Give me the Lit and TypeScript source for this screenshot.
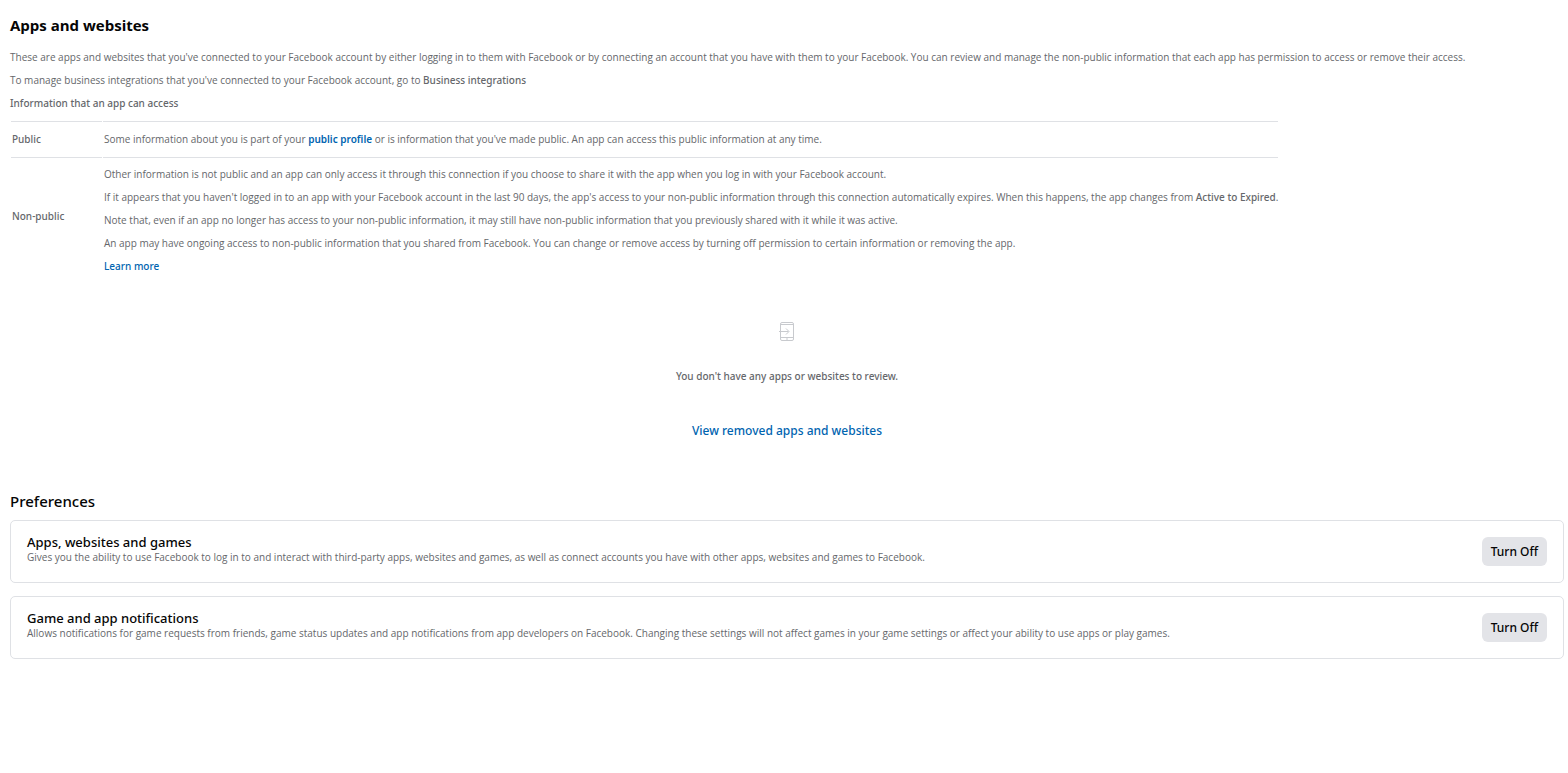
import { LitElement, html, css } from "lit";
import { customElement } from "lit/decorators.js";

@customElement("app-root")
export class AppRoot extends LitElement {
  static styles = css`
    :host { display: block; background: #fff; color: #65676b; font: 10px/15px "Open Sans", sans-serif; }
    .page { padding: 15px 4px 16px 10px; }
    h1, h2, h3, p { margin: 0; }
    h1 { font-size: 15px; line-height: 20px; font-weight: 700; color: #050505; }
    .intro { padding-top: 15px; display: grid; gap: 8px; }
    b, .label, a, th, .empty p, h2, h3, button { font-family: "Noto Sans", sans-serif; font-weight: 500; }
    a { color: #0064b0; text-decoration: none; }
    .profile { font-weight: 600; }
    a.plain { color: inherit; }
    table { margin-top: 10px; border-collapse: separate; border-spacing: 1px 0; }
    th, td { text-align: left; border-top: 1px solid #dfe1e5; }
    th { width: 91px; padding: 0 1px; box-sizing: border-box; }
    td { padding: 10px 0 10px 1px; }
    td.long { padding: 9px 0 1px 1px; }
    .stack { display: grid; gap: 8px; }
    .empty { display: flex; flex-direction: column; align-items: center; padding-top: 47px; }
    .empty svg { width: 20px; height: 20px; }
    .empty p { margin: 27px 0 38px; }
    .removed { font-size: 12px; line-height: 18px; }
    h2 { margin: 51px 0 9px; font-size: 15px; line-height: 20px; color: #050505; }
    .cards { display: grid; gap: 13px; }
    .card { display: flex; align-items: center; justify-content: space-between; border: 1px solid #dfe1e5; border-radius: 5px; padding: 13px 16px; }
    .text { padding-bottom: 4px; }
    h3 { font-size: 13px; line-height: 16px; color: #050505; }
    button { border: 0; border-radius: 6px; background: #e3e4e8; color: #050505; font-size: 12px; line-height: 17px; padding: 6px 9px; white-space: nowrap; }
  `;

  private card(title: string, text: string) {
    return html`<section class="card">
      <div class="text"><h3>${title}</h3><p>${text}</p></div>
      <button type="button" aria-label="Turn Off ${title}">Turn Off</button>
    </section>`;
  }

  render() {
    return html`<main class="page">
      <h1>Apps and websites</h1>
      <div class="intro">
        <p>These are apps and websites that you've connected to your Facebook account by either logging in to them with Facebook or by connecting an account that you have with them to your Facebook. You can review and manage the non-public information that each app has permission to access or remove their access.</p>
        <p>To manage business integrations that you've connected to your Facebook account, go to <a class="plain" href="#business">Business integrations</a></p>
        <p class="label">Information that an app can access</p>
      </div>
      <table>
        <tr><th scope="row">Public</th><td>Some information about you is part of your <a class="profile" href="#profile">public profile</a> or is information that you've made public. An app can access this public information at any time.</td></tr>
        <tr><th scope="row">Non-public</th><td class="long"><div class="stack">
          <p>Other information is not public and an app can only access it through this connection if you choose to share it with the app when you log in with your Facebook account.</p>
          <p>If it appears that you haven't logged in to an app with your Facebook account in the last 90 days, the app's access to your non-public information through this connection automatically expires. When this happens, the app changes from <b>Active to Expired</b>.</p>
          <p>Note that, even if an app no longer has access to your non-public information, it may still have non-public information that you previously shared with it while it was active.</p>
          <p>An app may have ongoing access to non-public information that you shared from Facebook. You can change or remove access by turning off permission to certain information or removing the app.</p>
          <a href="#learn">Learn more</a>
        </div></td></tr>
      </table>
      <div class="empty">
        <svg viewBox="0 0 20 20" fill="none" stroke="#c8cace" aria-hidden="true">
          <rect x="3.5" y="0.5" width="13" height="18" rx="1.5" />
          <path d="M3.5 2.5h13M3.5 15.5h13M9 17h2M2 9.5h9.5M9 6.5l3 3-3 3" />
        </svg>
        <p>You don't have any apps or websites to review.</p>
        <a class="removed" href="#removed">View removed apps and websites</a>
      </div>
      <h2>Preferences</h2>
      <div class="cards">
        ${this.card("Apps, websites and games", "Gives you the ability to use Facebook to log in to and interact with third-party apps, websites and games, as well as connect accounts you have with other apps, websites and games to Facebook.")}
        ${this.card("Game and app notifications", "Allows notifications for game requests from friends, game status updates and app notifications from app developers on Facebook. Changing these settings will not affect games in your game settings or affect your ability to use apps or play games.")}
      </div>
    </main>`;
  }
}
